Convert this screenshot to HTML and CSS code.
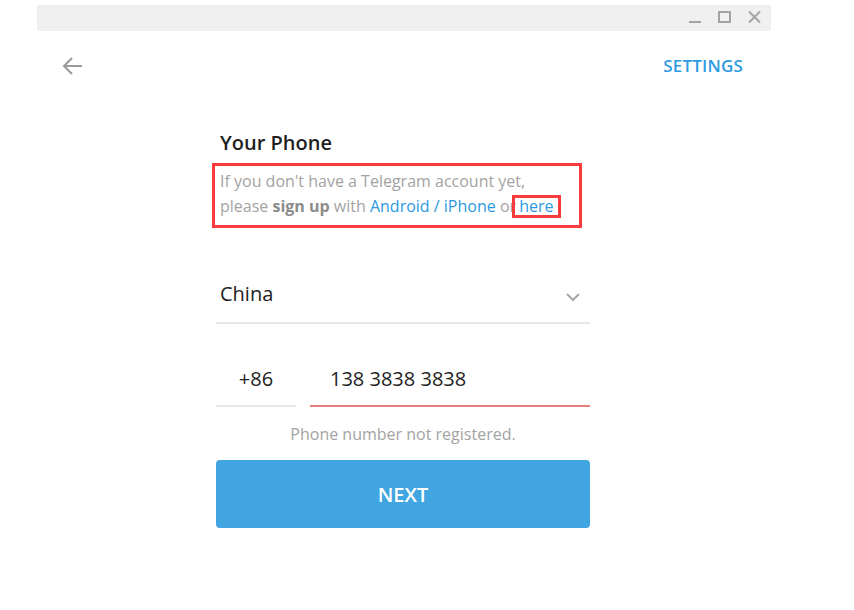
FILE: index.html
```html
<!DOCTYPE html>
<html>
<head>
<meta charset="utf-8">
<link rel="stylesheet" href="styles.css">
</head>
<body>
<div class="window">
  <div class="titlebar">
    <div class="ctl"><svg width="14" height="14" viewBox="0 0 14 14"><path d="M1 11h12" stroke="#a3a3a3" stroke-width="2"/></svg></div>
    <div class="ctl"><svg width="14" height="14" viewBox="0 0 14 14"><rect x="1" y="1" width="11" height="10" fill="none" stroke="#a3a3a3" stroke-width="2"/></svg></div>
    <div class="ctl"><svg width="14" height="14" viewBox="0 0 14 14"><path d="M1 0.5l11 11M12 0.5l-11 11" stroke="#a3a3a3" stroke-width="2"/></svg></div>
  </div>
  <div class="topbar">
    <svg class="back" width="20" height="20" viewBox="0 0 20 20"><path d="M2 10h18M10 2l-8 8 8 8" fill="none" stroke="#9a9a9a" stroke-width="2"/></svg>
    <a class="settings">SETTINGS</a>
  </div>
  <div class="column">
    <div class="title">Your Phone</div>
    <div class="desc">If you don't have a Telegram account yet,<br>please <b>sign up</b> with <a class="link">Android / iPhone</a> or <span class="here link">here</span></div>
    <div class="country">
      <span>China</span>
      <svg width="14" height="9" viewBox="0 0 14 9"><path d="M1 1l6 6 6-6" fill="none" stroke="#a8a8a8" stroke-width="2"/></svg>
    </div>
    <div class="phone">
      <div class="code">+86</div>
      <div class="number">138 3838 3838</div>
    </div>
    <div class="error">Phone number not registered.</div>
    <button class="next">NEXT</button>
  </div>
</div>
</body>
</html>
```
FILE: styles.css
```css
html, body {
  margin: 0;
  padding: 0;
  background: #ffffff;
  font-family: "Open Sans", "Noto Sans", sans-serif;
}
.window {
  margin: 5px 0 0 37px;
  width: 734px;
}
.titlebar {
  height: 26px;
  background: #f0f0f0;
  display: flex;
  justify-content: flex-end;
  align-items: center;
  padding-right: 1px;
}
.ctl {
  width: 30px;
  height: 26px;
  display: flex;
  align-items: center;
  justify-content: center;
}
.ctl svg { display: block; }
.topbar {
  height: 70px;
  display: flex;
  justify-content: space-between;
  align-items: center;
  padding: 0 28px 0 25px;
}
.back { display: block; }
.settings {
  color: #2d9ae0;
  font-size: 17px;
  font-weight: 600;
  letter-spacing: 0.2px;
  margin-top: -1px;
}
.column {
  width: 374px;
  margin-left: 179px;
}
.title {
  margin-top: 28px;
  padding-left: 4px;
  font-size: 20px;
  line-height: 28px;
  font-weight: 600;
  color: #1f1f1f;
}
.desc {
  margin: 6px 0 0 -4px;
  width: 370px;
  box-sizing: border-box;
  border: 3px solid #fb3a3e;
  padding: 3px 5px 6px 5px;
  font-size: 16px;
  line-height: 25px;
  color: #a3a3a3;
}
.desc b {
  color: #8c8c8c;
  font-weight: 700;
}
.link { color: #2d9ae0; }
.here {
  display: inline-block;
  line-height: 17px;
  border: 3px solid #fb3a3e;
  padding: 0 4px;
  margin-left: -8px;
}
.country {
  margin-top: 52px;
  display: flex;
  justify-content: space-between;
  align-items: center;
  padding: 0 10px 14px 4px;
  border-bottom: 2px solid #e8e8e8;
  font-size: 20px;
  line-height: 28px;
  color: #222;
}
.country svg { display: block; margin-top: 6px; }
.phone {
  margin-top: 41px;
  display: flex;
  gap: 14px;
  font-size: 20px;
  line-height: 28px;
  color: #222;
}
.code {
  width: 80px;
  text-align: center;
  padding-bottom: 12px;
  border-bottom: 2px solid #e8e8e8;
}
.number {
  flex: 1;
  padding: 0 0 12px 20px;
  border-bottom: 2px solid #e47d7d;
}
.error {
  margin-top: 16px;
  text-align: center;
  font-size: 16px;
  line-height: 22px;
  color: #a3a3a3;
}
.next {
  display: block;
  margin-top: 15px;
  width: 374px;
  height: 68px;
  border: none;
  border-radius: 4px;
  background: #40a5e0;
  color: #ffffff;
  font-family: "Open Sans", "Noto Sans", sans-serif;
  font-size: 20px;
  font-weight: 600;
}
```
